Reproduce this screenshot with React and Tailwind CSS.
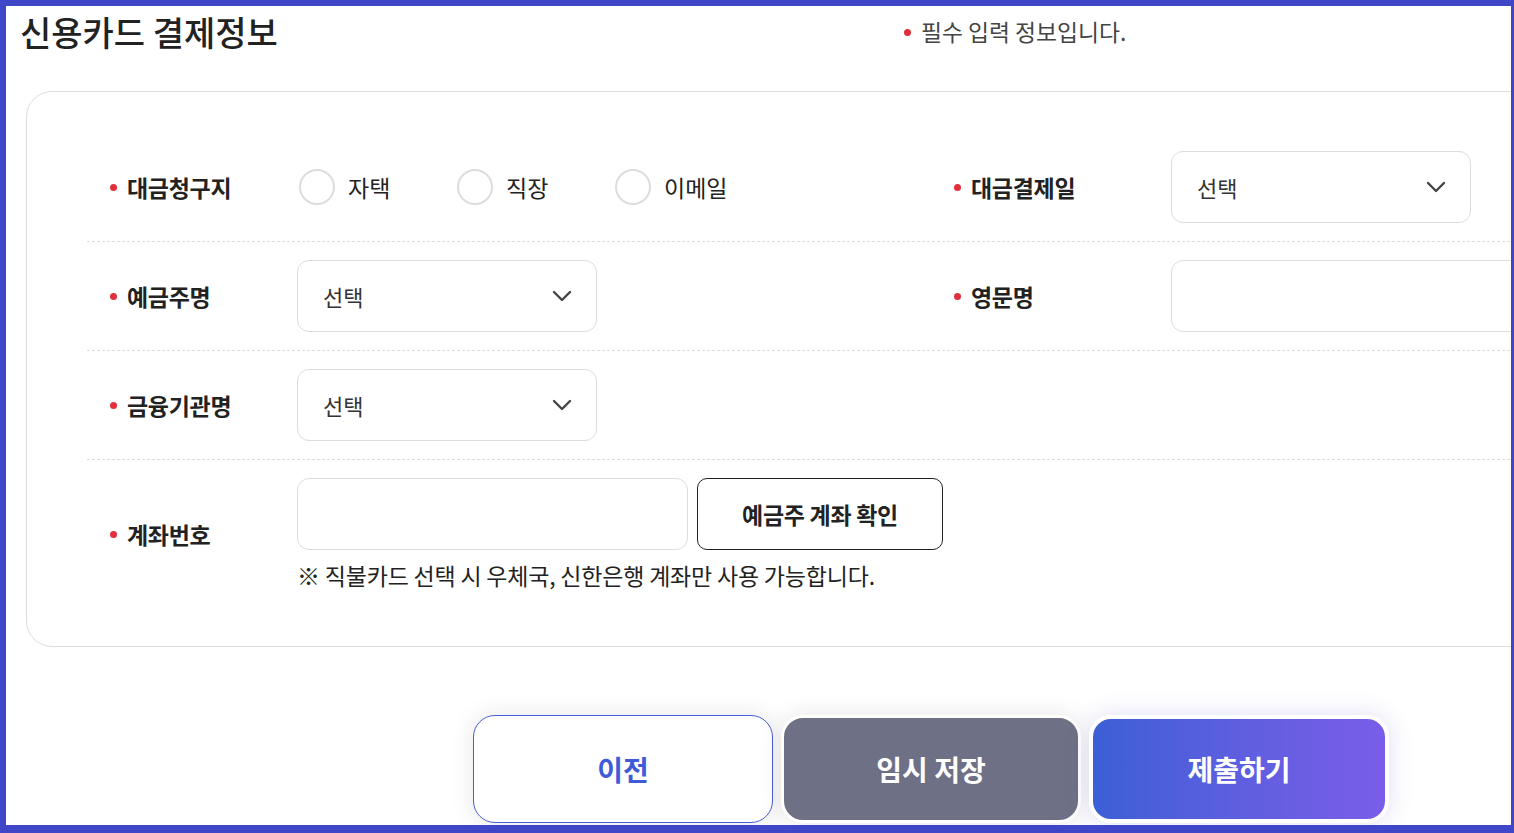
const Chevron = () => (
  <svg width="20" height="12" viewBox="0 0 20 12" fill="none">
    <polyline points="2,2 10,10 18,2" stroke="#444" strokeWidth="2.4" strokeLinecap="round" strokeLinejoin="round" />
  </svg>
)

const Label = ({ children }) => (
  <div className="flex items-center gap-[10px] pl-[23px] text-[23px] font-bold text-[#222] tracking-[-0.3px]">
    <span className="w-[7px] h-[7px] rounded-full bg-[#e0303a]" />
    {children}
  </div>
)

const Select = ({ className = 'w-[300px]' }) => (
  <div className={`${className} h-[72px] flex items-center justify-between pl-[25px] pr-[24px] border border-[#ddd] rounded-[12px] bg-white`}>
    <span className="text-[22px] text-[#333]">선택</span>
    <Chevron />
  </div>
)

const Radio = ({ label }) => (
  <div className="flex items-center gap-[13px] w-[158px]">
    <span className="w-[36px] h-[36px] rounded-full border-2 border-[#ddd] bg-white" />
    <span className="text-[23px] text-[#222]">{label}</span>
  </div>
)

export default function App() {
  return (
    <div className="w-[1514px] h-[833px] bg-[#4046c8] pt-[6px] pl-[6px] pr-[3px] pb-[8px] font-['Noto_Sans_CJK_KR','Noto_Sans',sans-serif]">
      <div className="h-full bg-white overflow-hidden">
        {/* 제목 */}
        <div className="grid grid-cols-[898px_1fr] h-[85px]">
          <h1 className="pl-[14px] pt-[4px] text-[34px] leading-[44px] font-medium text-[#222]">
            신용카드 결제정보
          </h1>
          <div className="flex items-center gap-[10px] pt-[10px] self-start text-[22.8px] leading-[32px] text-[#444]">
            <span className="w-[7px] h-[7px] rounded-full bg-[#e0303a]" />
            필수 입력 정보입니다.
          </div>
        </div>

        {/* 입력 카드 */}
        <div className="ml-[20px] w-[1620px] border border-[#ddd] rounded-[26px] pt-[41px] pl-[60px] pb-[56px]">
          <div className="flex items-center py-[18px] border-b border-dashed border-[#ddd]">
            <div className="w-[212px]"><Label>대금청구지</Label></div>
            <div className="w-[632px] flex">
              <Radio label="자택" />
              <Radio label="직장" />
              <Radio label="이메일" />
            </div>
            <div className="w-[240px]"><Label>대금결제일</Label></div>
            <Select />
          </div>

          <div className="flex items-center py-[18px] border-b border-dashed border-[#ddd]">
            <div className="w-[210px]"><Label>예금주명</Label></div>
            <div className="w-[634px]"><Select /></div>
            <div className="w-[240px]"><Label>영문명</Label></div>
            <div className="w-[390px] h-[72px] border border-[#ddd] rounded-[12px]" />
          </div>

          <div className="flex items-center py-[18px] border-b border-dashed border-[#ddd]">
            <div className="w-[210px]"><Label>금융기관명</Label></div>
            <Select />
          </div>

          <div className="flex items-center pt-[18px]">
            <div className="w-[210px]"><Label>계좌번호</Label></div>
            <div className="flex flex-col">
              <div className="flex gap-[9px]">
                <div className="w-[391px] h-[72px] border border-[#ddd] rounded-[12px]" />
                <button className="w-[246px] h-[72px] border border-[#222] rounded-[10px] bg-white text-[23px] font-bold text-[#222] tracking-[-0.3px]">
                  예금주 계좌 확인
                </button>
              </div>
              <p className="mt-[10px] text-[23px] leading-[30px] text-[#222] tracking-[-0.2px]">
                ※ 직불카드 선택 시 우체국, 신한은행 계좌만 사용 가능합니다.
              </p>
            </div>
          </div>
        </div>

        {/* 하단 버튼 */}
        <div className="flex items-center gap-[8px] ml-[467px] mt-[68px]">
          <button className="w-[300px] h-[108px] rounded-[22px] border border-[#4a5fd8] bg-white text-[28px] font-bold text-[#3f5bd8] shadow-[0_0_24px_rgba(0,0,0,0.1)]">
            이전
          </button>
          <button className="w-[300px] h-[108px] rounded-[22px] border-[3px] border-white bg-[#6e7085] text-[28px] font-bold text-white shadow-[0_0_24px_rgba(0,0,0,0.1)]">
            임시 저장
          </button>
          <button className="w-[300px] h-[108px] rounded-[22px] border-[4px] border-white bg-gradient-to-r from-[#3b5fd6] to-[#7a5de9] text-[28px] font-bold text-white shadow-[0_0_24px_rgba(80,70,200,0.18)]">
            제출하기
          </button>
        </div>
      </div>
    </div>
  )
}
